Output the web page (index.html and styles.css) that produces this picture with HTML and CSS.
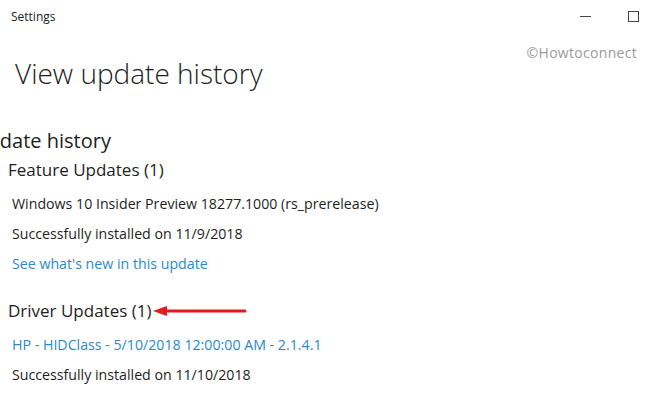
FILE: index.html
```html
<!DOCTYPE html>
<html lang="en">
<head>
    <meta charset="UTF-8">
    <meta name="viewport" content="width=device-width, initial-scale=1.0">
    <title>Settings</title>
    <link rel="stylesheet" href="styles.css">
</head>
<body>
    <div class="titlebar">
        <span class="app-name">Settings</span>
        <div class="window-controls">
            <span class="btn-min"></span>
            <span class="btn-max"></span>
        </div>
    </div>

    <div class="watermark">©Howtoconnect</div>

    <main class="page">
        <h1>View update history</h1>

        <h2 class="section-title">Update history</h2>

        <section class="group">
            <h3>Feature Updates (1)</h3>
            <p>Windows 10 Insider Preview 18277.1000 (rs_prerelease)</p>
            <p>Successfully installed on 11/9/2018</p>
            <a href="#">See what's new in this update</a>
        </section>

        <section class="group">
            <h3>Driver Updates (1)<svg class="arrow" width="94" height="12" viewBox="0 0 94 12">
                <line x1="10" y1="6" x2="92" y2="6" stroke="#e31b1b" stroke-width="3" stroke-linecap="round"/>
                <polygon points="0,6 14,1 14,11" fill="#e31b1b"/>
            </svg></h3>
            <a href="#">HP - HIDClass - 5/10/2018 12:00:00 AM - 2.1.4.1</a>
            <p>Successfully installed on 11/10/2018</p>
        </section>
    </main>
</body>
</html>
```

FILE: styles.css
```css
body {
    font-family: 'Open Sans', 'Noto Sans', sans-serif;
    background: #fff;
    color: #1e1e1e;
    margin: 0;
    padding: 0;
    width: 650px;
    height: 400px;
    overflow: hidden;
    position: relative;
}

.titlebar {
    display: flex;
    justify-content: space-between;
    align-items: center;
    height: 32px;
    padding: 0 11px;
}

.app-name {
    font-size: 12px;
    color: #222;
}

.window-controls {
    display: flex;
    align-items: center;
    gap: 37px;
}

.btn-min {
    width: 11px;
    height: 1px;
    background: #444;
}

.btn-max {
    width: 9px;
    height: 9px;
    border: 1px solid #444;
}

.watermark {
    position: absolute;
    top: 43px;
    right: 13px;
    font-size: 14px;
    color: #9a9a9a;
    letter-spacing: 0.3px;
}

.page {
    padding: 21px 0 0 12px;
}

h1 {
    font-size: 28px;
    font-weight: 300;
    margin: 0 0 34px 3px;
    line-height: 40px;
}

.section-title {
    font-size: 20px;
    font-weight: 400;
    margin: 0 0 0 -39px;
    line-height: 28px;
}

.group h3 {
    font-size: 17px;
    font-weight: 400;
    margin: 0 0 4px -4px;
    line-height: 30px;
    display: flex;
    align-items: center;
}

.arrow {
    margin-left: 1px;
}

.group p, .group a {
    display: block;
    font-size: 14.2px;
    line-height: 30px;
    margin: 0;
}

.group a {
    color: #2b8ac9;
    text-decoration: none;
}

.group + .group {
    margin-top: 17px;
}
```
